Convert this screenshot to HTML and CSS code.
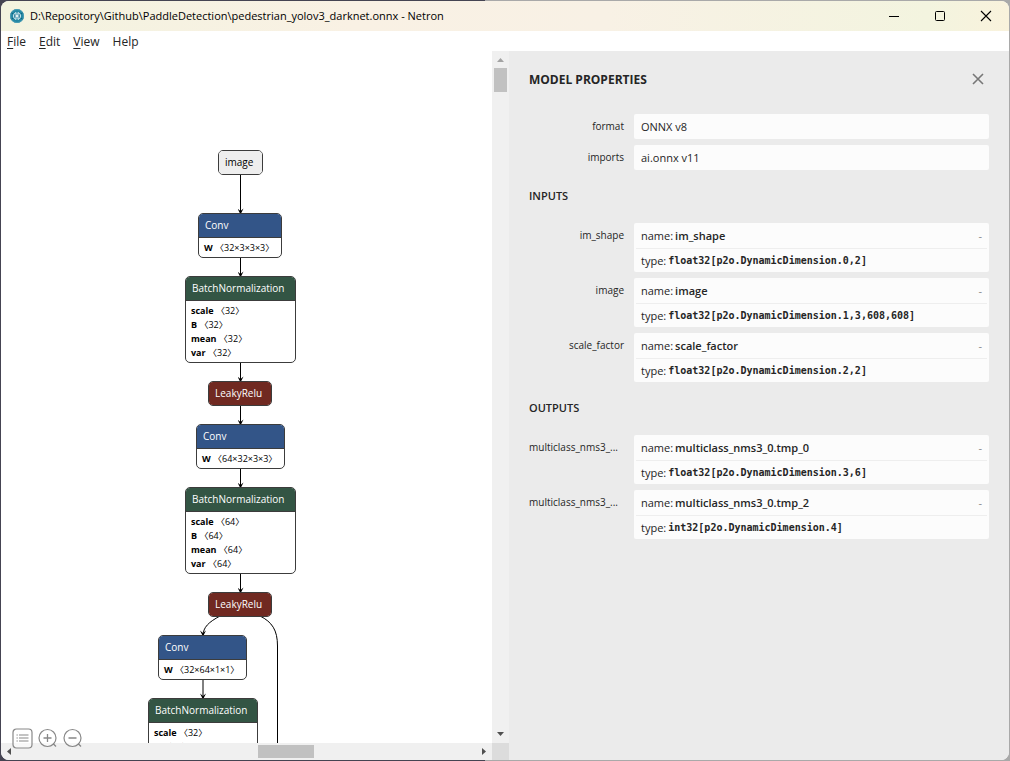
FILE: index.html
```html
<!DOCTYPE html>
<html lang="en">
<head>
<meta charset="utf-8">
<title>Netron</title>
<link rel="stylesheet" href="styles.css">
</head>
<body>
<div class="window">
  <header class="titlebar">
    <svg class="app-icon" width="16" height="16" viewBox="0 0 16 16" aria-hidden="true">
      <circle cx="8" cy="8" r="7" fill="#2387a3"/>
      <circle cx="8" cy="8" r="6.500" fill="none" stroke="#4a9db5"/>
      <path d="M2.500 5 4 6M2.500 11 4 10M13.500 5 12 6M13.500 11 12 10" stroke="#0d5e7d" fill="none"/>
      <path d="M7 4.500 4.700 6.500v3L7 11.500zM9 4.500 11.300 6.500v3L9 11.500z" fill="#1b7291" stroke="#e9f6f8"/>
      <path d="M7 8h2" stroke="#fff" stroke-width="1.500"/>
    </svg>
    <span class="title-text">D:\Repository\Github\PaddleDetection\pedestrian_yolov3_darknet.onnx - Netron</span>
    <div class="window-controls">
      <button type="button" aria-label="Minimize"><svg width="12" height="12" viewBox="0 0 12 12"><path d="M1 6.500h10" stroke="#000"/></svg></button>
      <button type="button" aria-label="Maximize"><svg width="12" height="12" viewBox="0 0 12 12"><rect x="1.500" y="1.500" width="9" height="9" rx="1" fill="none" stroke="#000"/></svg></button>
      <button type="button" aria-label="Close"><svg width="12" height="12" viewBox="0 0 12 12"><path d="M1 1l10 10M11 1 1 11" stroke="#000" stroke-width="1.100"/></svg></button>
    </div>
  </header>
  <nav class="menubar">
    <button type="button"><u>F</u>ile</button>
    <button type="button"><u>E</u>dit</button>
    <button type="button"><u>V</u>iew</button>
    <button type="button">Help</button>
  </nav>
  <main class="content">
    <section class="viewer">
      <div class="canvas">
        <svg class="edges" width="490" height="1000" viewBox="1 51 490 1000" aria-hidden="true">
          <defs>
            <marker id="arrow" viewBox="0 0 10 10" refX="9" refY="5" markerWidth="7" markerHeight="6" markerUnits="userSpaceOnUse" orient="auto"><path d="M0 0 10 5 0 10 4 5z"/></marker>
          </defs>
          <g fill="none" stroke="#000" marker-end="url(#arrow)">
            <path d="M240.500 174V214"/>
            <path d="M240.500 257V277"/>
            <path d="M240.500 362V382"/>
            <path d="M240.500 405V425"/>
            <path d="M240.500 468V488"/>
            <path d="M240.500 573V593"/>
            <path d="M220 616C209 622 203 627 203 636"/>
            <path d="M203 679V699"/>
          </g>
          <path d="M260 616C272 622 277.500 630 277.500 646V1000" fill="none" stroke="#000"/>
        </svg>
        <div class="node input" style="left:217px;top:99px;width:45px"><div class="op">image</div></div>
        <div class="node conv" style="left:197px;top:162px;width:84px"><div class="op">Conv</div><div class="attrs"><div><b>W</b> 〈32×3×3×3〉</div></div></div>
        <div class="node norm" style="left:184px;top:225px;width:111px"><div class="op">BatchNormalization</div><div class="attrs"><div><b>scale</b> 〈32〉</div><div><b>B</b> 〈32〉</div><div><b>mean</b> 〈32〉</div><div><b>var</b> 〈32〉</div></div></div>
        <div class="node relu" style="left:207px;top:330px;width:64px"><div class="op">LeakyRelu</div></div>
        <div class="node conv" style="left:195px;top:373px;width:89px"><div class="op">Conv</div><div class="attrs"><div><b>W</b> 〈64×32×3×3〉</div></div></div>
        <div class="node norm" style="left:184px;top:436px;width:111px"><div class="op">BatchNormalization</div><div class="attrs"><div><b>scale</b> 〈64〉</div><div><b>B</b> 〈64〉</div><div><b>mean</b> 〈64〉</div><div><b>var</b> 〈64〉</div></div></div>
        <div class="node relu" style="left:207px;top:541px;width:64px"><div class="op">LeakyRelu</div></div>
        <div class="node conv" style="left:157px;top:584px;width:89px"><div class="op">Conv</div><div class="attrs"><div><b>W</b> 〈32×64×1×1〉</div></div></div>
        <div class="node norm" style="left:147px;top:647px;width:110px"><div class="op">BatchNormalization</div><div class="attrs"><div><b>scale</b> 〈32〉</div><div><b>B</b> 〈32〉</div></div></div>
      </div>
      <div class="vscroll">
        <svg width="17" height="17" viewBox="0 0 17 17"><path d="M5 11 8.500 7 12 11z" fill="#a3a3a3"/></svg>
        <div class="vthumb"></div>
        <svg class="end" width="17" height="17" viewBox="0 0 17 17"><path d="M5 6 8.500 10 12 6z" fill="#505050"/></svg>
      </div>
      <div class="hscroll">
        <svg width="17" height="17" viewBox="0 0 17 17"><path d="M10 5 6 8.500 10 12z" fill="#505050"/></svg>
        <div class="hthumb"></div>
        <svg class="end" width="17" height="17" viewBox="0 0 17 17"><path d="M7 5 11 8.500 7 12z" fill="#505050"/></svg>
      </div>
      <div class="corner"></div>
      <div class="toolbar">
        <button type="button" aria-label="Model properties"><svg width="21" height="21" viewBox="0 0 21 21"><rect x="1" y="1" width="19" height="19" rx="3.500" fill="#fff" fill-opacity=".5" stroke="#888" stroke-width="1.200"/><path d="M7 7h9.500M7 10h9.500M7 13h9.500M4.500 7h1.300M4.500 10h1.300M4.500 13h1.300" stroke="#888" stroke-width="1.100"/></svg></button>
        <button type="button" aria-label="Zoom in"><svg width="21" height="21" viewBox="0 0 21 21"><circle cx="10.500" cy="10" r="8.500" fill="#fff" fill-opacity=".5" stroke="#888" stroke-width="1.200"/><path d="M6.500 10h8M10.500 6v8M16 15.500l3 3" fill="none" stroke="#888" stroke-width="1.300"/></svg></button>
        <button type="button" aria-label="Zoom out"><svg width="21" height="21" viewBox="0 0 21 21"><circle cx="10.500" cy="10" r="8.500" fill="#fff" fill-opacity=".5" stroke="#888" stroke-width="1.200"/><path d="M6.500 10h8M16 15.500l3 3" fill="none" stroke="#888" stroke-width="1.300"/></svg></button>
      </div>
    </section>
    <aside class="sidebar">
      <div class="sidebar-head">
        <h1>MODEL PROPERTIES</h1>
        <button type="button" class="close" aria-label="Close panel"><svg width="12" height="12" viewBox="0 0 12 12"><path d="M1 1l10 10M11 1 1 11" stroke="#777" stroke-width="1.600"/></svg></button>
      </div>
      <dl class="props">
        <dt>format</dt><dd><div class="line">ONNX v8</div></dd>
        <dt>imports</dt><dd><div class="line">ai.onnx v11</div></dd>
      </dl>
      <h2>INPUTS</h2>
      <dl class="props">
        <dt>im_shape</dt><dd><div class="line">name: <b>im_shape</b><button type="button">-</button></div><div class="line">type: <code>float32[p2o.DynamicDimension.0,2]</code></div></dd>
        <dt>image</dt><dd><div class="line">name: <b>image</b><button type="button">-</button></div><div class="line">type: <code>float32[p2o.DynamicDimension.1,3,608,608]</code></div></dd>
        <dt>scale_factor</dt><dd><div class="line">name: <b>scale_factor</b><button type="button">-</button></div><div class="line">type: <code>float32[p2o.DynamicDimension.2,2]</code></div></dd>
      </dl>
      <h2>OUTPUTS</h2>
      <dl class="props outputs">
        <dt>multiclass_nms3_...</dt><dd><div class="line">name: <b>multiclass_nms3_0.tmp_0</b><button type="button">-</button></div><div class="line">type: <code>float32[p2o.DynamicDimension.3,6]</code></div></dd>
        <dt>multiclass_nms3_...</dt><dd><div class="line">name: <b>multiclass_nms3_0.tmp_2</b><button type="button">-</button></div><div class="line">type: <code>int32[p2o.DynamicDimension.4]</code></div></dd>
      </dl>
    </aside>
  </main>
</div>
</body>
</html>
```
FILE: styles.css
```css
* { box-sizing: border-box; }
body {
  margin: 0;
  height: 100vh;
  padding: 1px;
  overflow: hidden;
  background: linear-gradient(90deg, #454452 0 48%, #a9a9a9 48%);
  font-family: "Open Sans", "Noto Sans", "Noto Sans CJK SC", sans-serif;
  color: #252525;
}
button {
  margin: 0;
  padding: 0;
  border: 0;
  background: none;
  font: inherit;
  color: inherit;
}
svg { display: block; flex: none; }
.edges path { marker-end: inherit; }
.window {
  display: flex;
  flex-direction: column;
  height: 100%;
  overflow: hidden;
  border-radius: 8px;
  background: #fff;
}
.titlebar {
  display: flex;
  align-items: center;
  flex: none;
  height: 30px;
  padding: 0 0 1px 8px;
  background: linear-gradient(90deg, #f3f3df, #f9f1e4 35%, #f8f1e5 60%, #f3f4df 92%, #f9f2dc);
  color: #000;
  font-size: 11px;
}
.app-icon { margin-right: 5px; }
.title-text { flex: 1; white-space: nowrap; }
.window-controls { display: flex; }
.window-controls button { display: grid; place-items: center; width: 46px; height: 30px; }
.menubar {
  display: flex;
  flex: none;
  gap: 13px;
  height: 20px;
  padding-left: 6px;
  font-size: 12px;
  line-height: 22px;
}
.menubar u { text-underline-offset: 2px; }
.content { display: flex; flex: 1; min-height: 0; }
.viewer {
  position: relative;
  display: grid;
  grid-template-columns: 1fr 17px;
  grid-template-rows: 1fr 17px;
  flex: 1;
  min-width: 0;
}
.canvas { position: relative; overflow: hidden; }
.edges { position: absolute; left: 0; top: 0; }
.node {
  position: absolute;
  overflow: hidden;
  border: 1px solid #3c3c3c;
  border-radius: 5px;
  background: #fff;
  color: #000;
}
.op { padding-left: 6px; font-size: 10px; line-height: 23px; white-space: nowrap; }
.input .op { background: #eee; }
.conv .op, .norm .op, .relu .op { color: #fff; }
.conv .op { background: #335588; }
.norm .op { background: #335544; }
.relu .op { background: #702921; }
.attrs {
  padding: 3px 5px 2px;
  border-top: 1px solid #3c3c3c;
  font-size: 9px;
  line-height: 14px;
  white-space: nowrap;
}
.vscroll { display: flex; flex-direction: column; background: #f0f0f0; }
.hscroll { display: flex; background: #f0f0f0; }
.vthumb { width: 13px; height: 24px; margin: 0 2px; background: #c1c1c1; }
.hthumb { width: 56px; height: 13px; margin: 2px 0 2px 240px; background: #c1c1c1; }
.vscroll .end { margin-top: auto; }
.hscroll .end { margin-left: auto; }
.corner { background: #dcdcdc; }
.toolbar { position: absolute; left: 11px; bottom: 11px; display: flex; gap: 4px; }
.sidebar {
  flex: none;
  width: min(60%, 500px);
  padding: 0 20px;
  overflow: hidden;
  background: #ebebeb;
  font-size: 11px;
}
.sidebar-head {
  display: flex;
  align-items: center;
  justify-content: space-between;
  height: 56px;
  margin-bottom: 7px;
}
h1, h2 { margin: 0; }
h1 { font-size: 12px; font-weight: 700; }
h2 { margin-bottom: 2px; font-size: 11px; font-weight: 600; line-height: 51px; }
.close { padding: 5px; }
.props {
  display: grid;
  grid-template-columns: 95px 1fr;
  gap: 6px 10px;
  margin: 0;
}
.props dt {
  font-size: 10px;
  line-height: 24px;
  text-align: right;
  white-space: nowrap;
}
.outputs dt { text-align: left; }
.props dd {
  min-width: 0;
  margin: 0;
  padding: 0 2px;
  border-radius: 2px;
  background: #fcfcfc;
}
.line { display: flex; gap: 2px; padding: 0 5px; line-height: 25px; white-space: nowrap; }
.line b { font-weight: 600; }
.line + .line { border-top: 1px solid #eee; line-height: 23px; }
.line button { margin-left: auto; color: #888; }
code { font: bold 10px/23px "DejaVu Sans Mono", monospace; }
```
